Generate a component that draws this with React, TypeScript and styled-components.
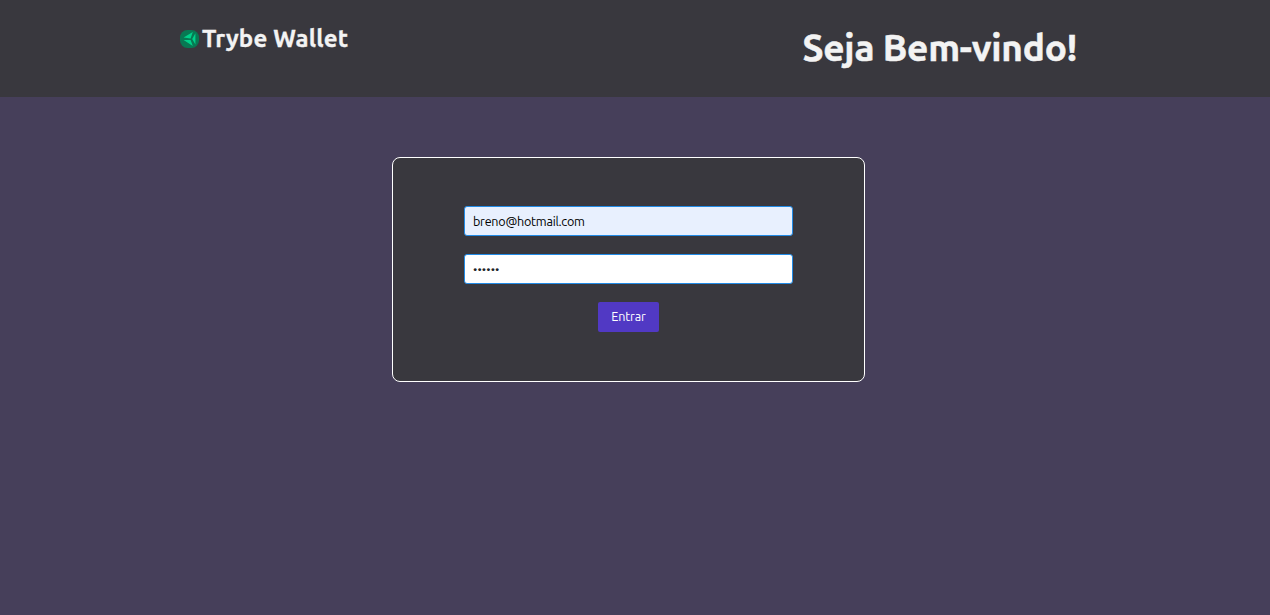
import React, { useState } from 'react';
import styled, { createGlobalStyle } from 'styled-components';

const GlobalStyle = createGlobalStyle`
  *, *::before, *::after { box-sizing: border-box; }
  body {
    margin: 0;
    background: #463f5a;
    font-family: Ubuntu, "Noto Sans", sans-serif;
  }
`;

const Page = styled.div`
  display: flex;
  flex-direction: column;
  min-height: 100vh;
`;

const Header = styled.header`
  display: flex;
  justify-content: space-between;
  align-items: flex-start;
  height: 97px;
  padding: 22px 193px 0 180px;
  background: #39383e;
  color: #f3f3f3;
`;

const Brand = styled.div`
  display: flex;
  align-items: flex-start;
  gap: 3px;
`;

const Logo = styled.svg`
  display: block;
  margin-top: 8px;
`;

const BrandName = styled.h2`
  margin: 0;
  font-size: 24px;
  font-weight: 700;
  line-height: 34px;
  letter-spacing: 0.2px;
  white-space: nowrap;
  -webkit-text-stroke: 0.3px currentColor;
`;

const Welcome = styled.h1`
  margin: 0;
  font-size: 37px;
  font-weight: 700;
  line-height: 52px;
  letter-spacing: -0.23px;
  white-space: nowrap;
  -webkit-text-stroke: 0.5px currentColor;
`;

const LoginCard = styled.form`
  display: flex;
  flex-direction: column;
  align-items: center;
  gap: 18px;
  width: 473px;
  height: 225px;
  margin: 60px auto 0 392px;
  padding-top: 48px;
  border: 1px solid #fff;
  border-radius: 8px;
  background: #39383e;
`;

const Field = styled.input<{ $filled?: boolean }>`
  width: 329px;
  height: 30px;
  padding: 0 8px;
  border: 1px solid #228be6;
  border-radius: 3px;
  outline: none;
  background: ${({ $filled }) => ($filled ? '#e8f0fe' : '#fff')};
  color: ${({ $filled }) => ($filled ? '#000' : '#212529')};
  font-family: inherit;
  font-size: ${({ $filled }) => ($filled ? '12.6px' : '12px')};
  letter-spacing: ${({ $filled }) => ($filled ? '-0.25px' : '0.1px')};
`;

const SubmitButton = styled.button`
  width: 61px;
  height: 30px;
  padding: 0 0 2px;
  border: 0;
  border-radius: 2px;
  background: #5139c4;
  color: #fff;
  font-family: inherit;
  font-size: 12.6px;
  letter-spacing: -0.15px;
  cursor: pointer;
`;

function TrybeLogo() {
  return (
    <Logo width="19" height="18" viewBox="0 0 19 18" aria-hidden="true">
      <rect width="19" height="18" rx="7.5" fill="#087853" />
      <path d="M12.8 1.9 3.6 7.6l7 .8zM3.6 10l9.2 6.1-2.2-6.1zM15.4 3.3 12.2 9l3.2 5.6z" fill="#00d08a" />
    </Logo>
  );
}

export default function App() {
  const [email, setEmail] = useState('breno@hotmail.com');
  const [password, setPassword] = useState('123456');

  return (
    <Page>
      <GlobalStyle />
      <Header>
        <Brand>
          <TrybeLogo />
          <BrandName>Trybe Wallet</BrandName>
        </Brand>
        <Welcome>Seja Bem-vindo!</Welcome>
      </Header>
      <LoginCard onSubmit={(e) => e.preventDefault()}>
        <Field $filled type="email" value={email} onChange={(e) => setEmail(e.target.value)} />
        <Field type="password" value={password} onChange={(e) => setPassword(e.target.value)} />
        <SubmitButton type="submit">Entrar</SubmitButton>
      </LoginCard>
    </Page>
  );
}
